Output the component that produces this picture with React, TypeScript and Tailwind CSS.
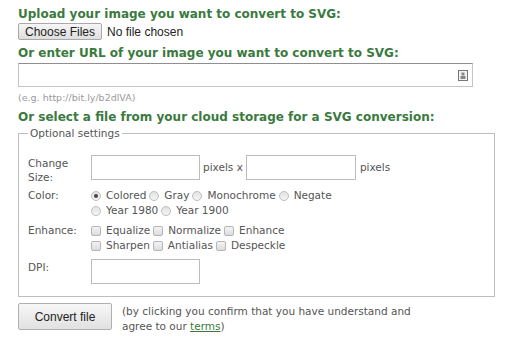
import React from 'react';

const Radio = ({ checked, label }: { checked?: boolean; label: string }) => (
  <span className="inline-flex items-center mr-[3px]">
    <span className="w-[10px] h-[10px] rounded-full border border-[#bdbdbd] bg-gradient-to-b from-[#e2e2e2] to-[#f5f5f5] flex items-center justify-center mr-[5px]">
      {checked && <span className="w-[4px] h-[4px] rounded-full bg-[#444]" />}
    </span>
    {label}
  </span>
);

const Check = ({ label }: { label: string }) => (
  <span className="inline-flex items-center mr-[3px]">
    <span className="w-[10px] h-[10px] rounded-[2px] border border-[#b5b5b5] bg-gradient-to-b from-[#f4f4f4] to-[#dcdcdc] mr-[5px]" />
    {label}
  </span>
);

const App: React.FC = () => {
  return (
    <div className="w-[509px] h-[342px] bg-white pl-[18px] pt-[6px] text-[#555] text-[10.5px] overflow-hidden" style={{ fontFamily: '"DejaVu Sans", Verdana, sans-serif' }}>
      <h2 className="text-[#3a7a3e] font-bold text-[12px] leading-[16px]">Upload your image you want to convert to SVG:</h2>
      <div className="flex items-center mt-[1px] h-[17px]" style={{ fontFamily: '"Liberation Sans", Arial, sans-serif' }}>
        <button className="h-[17px] px-[6px] border border-[#a9a9a9] rounded-[2px] bg-gradient-to-b from-[#f6f6f6] to-[#dedede] text-[12px] text-[#222] leading-none">Choose Files</button>
        <span className="ml-[5px] text-[12px] text-[#222]">No file chosen</span>
      </div>
      <h2 className="text-[#3a7a3e] font-bold text-[12px] leading-[16px] mt-[5px]">Or enter URL of your image you want to convert to SVG:</h2>
      <div className="w-[455px] h-[24px] mt-[2px] border border-[#c4c4c4] border-t-[#8f8f8f] flex items-center justify-end pr-[4px]">
        <svg width="10" height="11" viewBox="0 0 10 11">
          <rect x="0.5" y="0.5" width="9" height="10" fill="#f2f2f2" stroke="#777" />
          <rect x="3.5" y="2.5" width="3" height="3" fill="#888" />
          <rect x="2.5" y="6" width="5" height="3" fill="#888" />
        </svg>
      </div>
      <div className="text-[9.5px] text-[#9a9a9a] mt-[5px] leading-[12px]">(e.g. http://bit.ly/b2dlVA)</div>
      <h2 className="text-[#3a7a3e] font-bold text-[12px] leading-[16px] mt-[5px]">Or select a file from your cloud storage for a SVG conversion:</h2>
      <fieldset className="w-[477px] border border-[#bdbdbd] mt-[2px] pl-[9px] pt-[16px] pb-[12px]">
        <legend className="px-[2px] text-[10.5px] leading-[12px]">Optional settings</legend>
        <div className="grid grid-cols-[63px_1fr] leading-[15px]">
          <div className="pt-[1px] leading-[14px]">Change<br />Size:</div>
          <div className="flex items-start">
            <span className="w-[109px] h-[25px] border border-[#bcbcbc]" />
            <span className="ml-[3px] mr-[3px] leading-[25px]">pixels x</span>
            <span className="w-[110px] h-[25px] border border-[#bcbcbc]" />
            <span className="ml-[4px] leading-[25px]">pixels</span>
          </div>
          <div className="mt-[4px]">Color:</div>
          <div className="mt-[4px]">
            <div className="flex"><Radio checked label="Colored" /><Radio label="Gray" /><Radio label="Monochrome" /><Radio label="Negate" /></div>
            <div className="flex"><Radio label="Year 1980" /><Radio label="Year 1900" /></div>
          </div>
          <div className="mt-[5px]">Enhance:</div>
          <div className="mt-[5px]">
            <div className="flex"><Check label="Equalize" /><Check label="Normalize" /><Check label="Enhance" /></div>
            <div className="flex"><Check label="Sharpen" /><Check label="Antialias" /><Check label="Despeckle" /></div>
          </div>
          <div className="mt-[6px] pt-[1px]">DPI:</div>
          <div className="mt-[6px]"><span className="block w-[109px] h-[25px] border border-[#bcbcbc]" /></div>
        </div>
      </fieldset>
      <div className="flex mt-[6px]">
        <button className="w-[94px] h-[27px] border border-[#b0b0b0] rounded-[2px] bg-gradient-to-b from-[#f7f7f7] to-[#e1e1e1] text-[12px] text-[#222]" style={{ fontFamily: '"Liberation Sans", Arial, sans-serif' }}>Convert file</button>
        <div className="ml-[10px] leading-[15px] pt-[1px]">
          (by clicking you confirm that you have understand and<br />agree to our <a className="text-[#3a7a3e] underline">terms</a>)
        </div>
      </div>
    </div>
  );
};

export default App;
